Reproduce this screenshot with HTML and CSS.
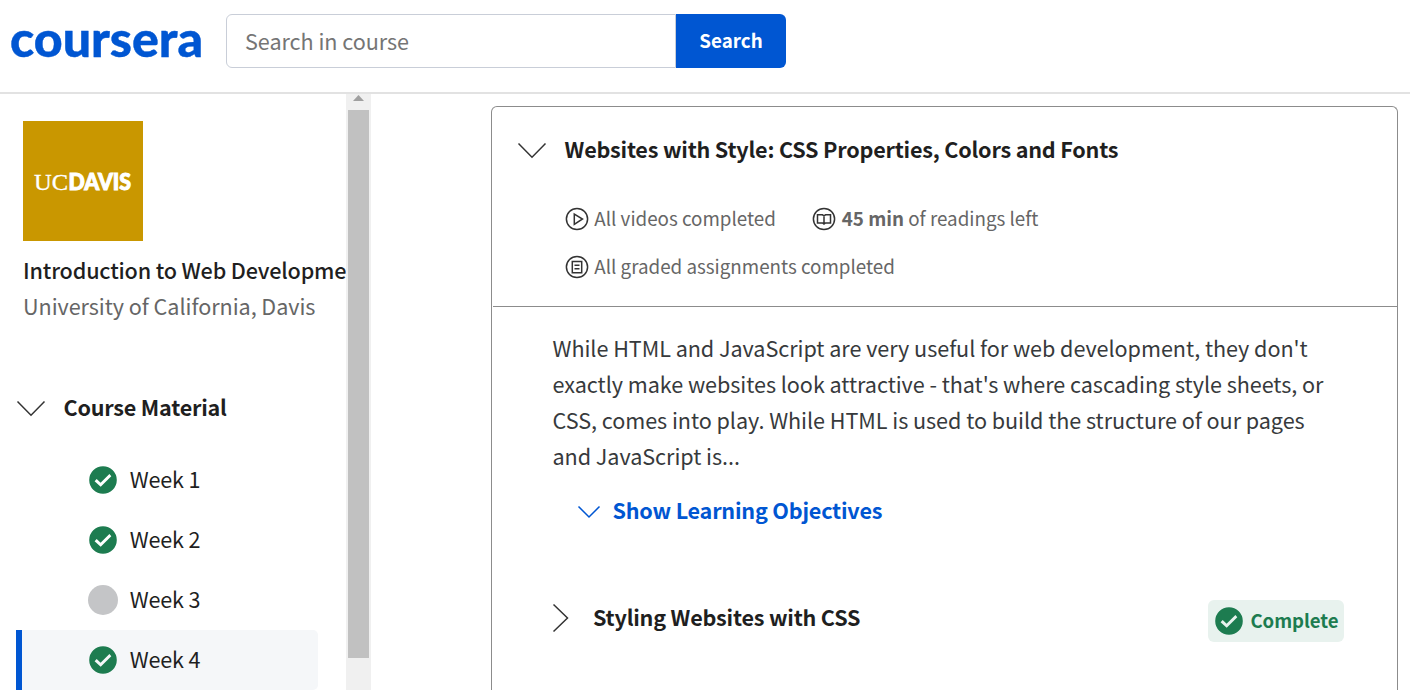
FILE: index.html
```html
<!DOCTYPE html>
<html lang="en">
<head>
<meta charset="utf-8">
<title>Introduction to Web Development | Coursera</title>
<link rel="stylesheet" href="styles.css">
</head>
<body>
<svg class="defs" aria-hidden="true">
  <symbol id="check" viewBox="0 0 28 28"><path fill-rule="evenodd" d="M14 .2a13.800 13.800 0 1 1 0 27.600a13.800 13.800 0 1 1 0-27.600zM5.600 15.300l6.100 5.500 10.600-10.600-1.900-2.200-8.800 8.800-3.900-3.700z"/></symbol>
</svg>
<header class="header">
  <a class="brand" aria-label="coursera"><svg width="192" height="80"><text class="brand-text" x="-1" y="57" textLength="193" lengthAdjust="spacingAndGlyphs">coursera</text></svg></a>
  <form class="search">
    <div class="search-input">Search in course</div>
    <button class="search-button" type="button">Search</button>
  </form>
</header>
<div class="layout">
  <aside class="sidebar">
    <div class="sidebar-content">
      <div class="course-logo"><svg width="120" height="120"><text class="uc" x="11" y="69" textLength="34" lengthAdjust="spacingAndGlyphs">UC</text><text class="davis" x="45.500" y="68.700" textLength="62.500" lengthAdjust="spacingAndGlyphs">DAVIS</text></svg></div>
      <div class="course-title">Introduction to Web Developme</div>
      <div class="course-school">University of California, Davis</div>
      <div class="material">
        <svg class="line-icon" width="30" height="18"><path d="M1.500 1.500L15 15.200 28.500 1.500"/></svg>
        <span class="raised">Course Material</span>
      </div>
      <nav class="weeks">
        <a class="week"><svg class="check"><use href="#check"/></svg><span class="raised">Week 1</span></a>
        <a class="week"><svg class="check"><use href="#check"/></svg><span class="raised">Week 2</span></a>
        <a class="week"><i class="pending"></i><span class="raised">Week 3</span></a>
        <a class="week current"><svg class="check"><use href="#check"/></svg><span class="raised">Week 4</span></a>
      </nav>
    </div>
    <div class="scrollbar">
      <svg class="scroll-arrow" width="11" height="6"><path d="M0 6L5.500 0 11 6z"/></svg>
      <div class="thumb"></div>
    </div>
  </aside>
  <main class="main">
    <section class="card">
      <div class="card-head">
        <h2 class="card-title">
          <svg class="line-icon" width="30" height="18"><path d="M1.500 1.500L15 15.200 28.500 1.500"/></svg>
          <span class="raised">Websites with Style: CSS Properties, Colors and Fonts</span>
        </h2>
        <div class="stats">
          <div class="stat">
            <svg class="stat-icon" viewBox="0 0 24 24"><circle cx="12" cy="12" r="10.600"/><path d="M9.300 7v10.400L17.500 12z"/></svg>
            <span class="raised">All videos completed</span>
          </div>
          <div class="stat">
            <svg class="stat-icon" viewBox="0 0 24 24"><circle cx="12" cy="12" r="10.600"/><path d="M5.500 7.800h5L12 8.800l1.500-1h5v8.200h-5L12 17l-1.500-1h-5zM12 8.800v9.200"/></svg>
            <span class="raised readings"><b>45 min</b> of readings left</span>
          </div>
          <div class="stat">
            <svg class="stat-icon" viewBox="0 0 24 24"><circle cx="12" cy="12" r="10.600"/><path d="M7.300 6.500h9.400v11.200H7.300zM9.500 10.200h5M9.500 13.800h5"/></svg>
            <span class="raised">All graded assignments completed</span>
          </div>
        </div>
      </div>
      <div class="card-body">
        <p class="description">While HTML and JavaScript are very useful for web development, they don't<br>exactly make websites look attractive - that's where cascading style sheets, or<br>CSS, comes into play. While HTML is used to build the structure of our pages<br>and JavaScript is...</p>
        <a class="objectives">
          <svg class="line-icon blue" width="24" height="14"><path d="M1.500 1.500L12 12 22.500 1.500"/></svg>
          <span class="raised">Show Learning Objectives</span>
        </a>
        <div class="lesson">
          <svg class="line-icon" width="18" height="30"><path d="M.5 1.500L14.500 15 .5 28.500"/></svg>
          <h3 class="lesson-title">Styling Websites with CSS</h3>
          <div class="complete"><svg class="check"><use href="#check"/></svg><span class="raised">Complete</span></div>
        </div>
      </div>
    </section>
  </main>
</div>
</body>
</html>
```

FILE: styles.css
```css
* { box-sizing: border-box; }
body {
  margin: 0;
  height: 690px;
  overflow: hidden;
  background: #fff;
  color: #1f1f1f;
  font-family: "Noto Sans CJK SC", "Noto Sans", sans-serif;
  font-size: 21.6px;
  letter-spacing: -0.05px;
  line-height: 36px;
  white-space: nowrap;
}
svg { display: block; flex: none; overflow: visible; }
.defs { width: 0; height: 0; position: absolute; }
.raised { padding-bottom: 2px; }

.header {
  height: 94px;
  padding-left: 11px;
  display: flex;
  align-items: flex-start;
  gap: 23px;
  border-bottom: 2px solid #e2e2e2;
}
.brand-text { font: 900 49px Lato, sans-serif; letter-spacing: 0; fill: #0056d2; stroke: #0056d2; stroke-width: .4; }
.search { display: flex; height: 54px; margin-top: 14px; }
.search-input {
  width: 450px;
  padding-left: 18px;
  border: 1px solid #c9ced8;
  border-radius: 6px 0 0 6px;
  color: #757575;
  line-height: 52px;
}
.search-button {
  width: 110px;
  padding: 0 0 2px;
  border: 0;
  border-radius: 0 6px 6px 0;
  background: #0056d2;
  color: #fff;
  font: 700 18.8px/52px "Noto Sans CJK SC", sans-serif;
}

.layout { display: flex; height: 596px; }
.sidebar { width: 371px; display: flex; }
.sidebar-content { width: 346px; overflow: hidden; padding-top: 27px; }
.course-logo { width: 120px; height: 120px; margin: 0 0 11px 23px; background: #c99700; }
.uc { font: 24px "Liberation Serif", serif; fill: #fff; stroke: #fff; stroke-width: .3; }
.davis { font: 900 22px Lato, sans-serif; fill: #fff; stroke: #fff; stroke-width: 1; }
.course-title { padding-left: 23px; font-weight: 500; letter-spacing: -0.17px; }
.course-school { padding-left: 23px; color: #666; }
.material { height: 36px; margin: 66px 0 0 16px; display: flex; align-items: center; gap: 17.5px; font-weight: 700; letter-spacing: -0.21px; }
.material .line-icon { margin-top: 2px; }
.line-icon { fill: none; stroke: #333; stroke-width: 1.5; }
.blue { stroke: #0056d2; }
.weeks { margin: 24px 0 0 16px; width: 302px; }
.week { display: flex; align-items: center; height: 60px; padding-left: 72px; gap: 11.7px; letter-spacing: -0.15px; }
.check { width: 28px; height: 28px; margin: 0 1px; fill: #1d7c50; }
.pending { width: 30px; height: 30px; border-radius: 50%; background: #c4c5c7; }
.current { background: #f5f7f9; border-left: 6px solid #0056d2; border-radius: 0 5px 5px 0; padding-left: 66px; }
.scrollbar { width: 25px; padding: 1px 2px 0; background: #f0f0f0; }
.scroll-arrow { margin: 0 auto 9px; fill: #a0a0a0; }
.thumb { height: 548px; background: #c1c1c1; }

.main { padding: 12px 0 0 120px; }
.card { width: 907px; height: 584px; border: 1px solid #8c8c8c; border-width: 1px 1px 0; border-radius: 6px 6px 0 0; }
.card-head { height: 200px; margin-left: 1px; border-bottom: 1px solid #8c8c8c; padding: 25px 0 0 24px; }
.card-title { margin: 0; height: 36px; display: flex; align-items: center; gap: 17.6px; font-size: 21.6px; letter-spacing: -0.21px; }
.card-title .line-icon { margin-top: 2px; }
.stats { width: 600px; margin: 27px 0 0 48px; display: flex; flex-wrap: wrap; column-gap: 36px; color: #666; font-size: 18.8px; line-height: 46px; letter-spacing: 0; }
.stat { display: flex; align-items: center; gap: 5.3px; }
.readings { padding-left: .5px; }
.stat-icon { width: 24px; height: 24px; fill: none; stroke: #333; stroke-width: 1.5; }
.card-body { padding: 23px 53px 0 60.5px; }
.description { margin: 0; color: #373a3c; }
.objectives { display: flex; align-items: center; height: 36px; gap: 11.5px; margin: 19px 0 0 24.5px; color: #0056d2; font-weight: 700; letter-spacing: -0.21px; }
.objectives .line-icon { margin-top: 2px; }
.lesson { display: flex; align-items: center; height: 42px; margin-top: 71px; }
.lesson-title { margin: 0 auto 8px 22.5px; font-size: 21.6px; letter-spacing: -0.21px; }
.lesson > .line-icon { margin-bottom: 6px; }
.complete { display: flex; align-items: center; gap: 6.4px; width: 136px; height: 42px; padding-left: 6px; border-radius: 6px; background: #e8f2ee; color: #1d7c50; font-weight: 700; font-size: 18.6px; }
```
